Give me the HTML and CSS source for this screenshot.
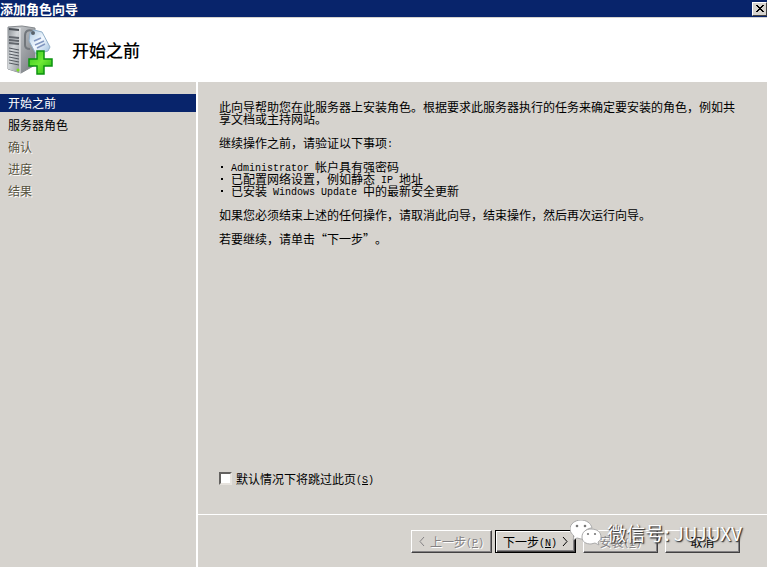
FILE: index.html
```html
<!DOCTYPE html>
<html lang="zh-CN">
<head>
    <meta charset="UTF-8">
    <meta name="viewport" content="width=device-width, initial-scale=1.0">
    <title>添加角色向导</title>
    <link rel="stylesheet" href="styles.css">
</head>
<body>
    <div class="titlebar">
        <span>添加角色向导</span>
        <button type="button" class="close" aria-label="关闭">
            <svg width="8" height="7" viewBox="0 0 8 7" shape-rendering="crispEdges"><path d="M0 0h2v1h1v1h2v-1h1v-1h2v1h-1v1h-1v1h-1v1h1v1h1v1h1v1h-2v-1h-1v-1h-2v1h-1v1h-2v-1h1v-1h1v-1h1v-1h-1v-1h-1v-1h-1z"/></svg>
        </button>
    </div>

    <header class="header">
        <svg class="logo" width="48" height="50" viewBox="0 0 48 50">
            <defs>
                <linearGradient id="front" x1="0" y1="0" x2="1" y2="1">
                    <stop offset="0" stop-color="#8d9297"/>
                    <stop offset=".45" stop-color="#d3d7da"/>
                    <stop offset="1" stop-color="#92979b"/>
                </linearGradient>
                <linearGradient id="side" x1="0" y1="0" x2="1" y2="1">
                    <stop offset="0" stop-color="#d4d7da"/>
                    <stop offset="1" stop-color="#74787d"/>
                </linearGradient>
                <linearGradient id="tag" x1="0" y1="0" x2="1" y2="1">
                    <stop offset="0" stop-color="#a9c7e2"/>
                    <stop offset=".5" stop-color="#f5faff"/>
                    <stop offset="1" stop-color="#98badb"/>
                </linearGradient>
                <linearGradient id="plus" x1="0" y1="0" x2="1" y2="1">
                    <stop offset="0" stop-color="#35c51d"/>
                    <stop offset=".5" stop-color="#6fea35"/>
                    <stop offset="1" stop-color="#1fae12"/>
                </linearGradient>
            </defs>
            <path d="M1 2 15 1l13 2v37l-14 8L1 44z" fill="url(#side)" stroke="#85898d"/>
            <path d="M1 2l12 1v45L1 44z" fill="url(#front)"/>
            <path d="M13 3v45" stroke="#f1f2f3"/>
            <path d="M2 3l10 1v2L2 5z" fill="#4c5157"/>
            <path d="M2 12l10 1M2 15l10 1M2 18l10 1" stroke="#62676d" stroke-width="2"/>
            <path d="M2 23l10 2M2 26l10 2M2 29l10 2M2 32l10 2M2 35l10 2M2 38l10 2" stroke="#555a61"/>
            <circle cx="11" cy="45" r="1.5" fill="#79df20"/>
            <path d="M26 6c-5-2-8 0-8 5v9q0 4 5 4" fill="none" stroke="#72777c" stroke-width="2"/>
            <path d="M23 8l4-3 8 2 8 15-2 4-12 3-7-13z" fill="url(#tag)" stroke="#91aec8"/>
            <circle cx="26" cy="8" r="2" fill="#59626b"/>
            <path d="M27 16l7-3M28 20l9-4M30 23l8-4" stroke="#8297c0" stroke-width="1.5"/>
            <path d="M30 26h7v8h8v7h-8v8h-7v-8h-8v-7h8z" fill="url(#plus)" stroke="#0c9310" stroke-width="1.5"/>
        </svg>
        <h1>开始之前</h1>
    </header>

    <div class="wizard">
        <nav class="steps">
            <a href="#before" class="active">开始之前</a>
            <a href="#roles">服务器角色</a>
            <a class="disabled">确认</a>
            <a class="disabled">进度</a>
            <a class="disabled">结果</a>
        </nav>

        <main class="page">
            <section class="content" id="before">
                <p>此向导帮助您在此服务器上安装角色。根据要求此服务器执行的任务来确定要安装的角色，例如共享文档或主持网站。</p>
                <p>继续操作之前，请验证以下事项<span class="latin">:</span></p>
                <ul>
                    <li><span class="latin">Administrator </span>帐户具有强密码</li>
                    <li>已配置网络设置，例如静态<span class="latin"> IP </span>地址</li>
                    <li>已安装<span class="latin"> Windows Update </span>中的最新安全更新</li>
                </ul>
                <p>如果您必须结束上述的任何操作，请取消此向导，结束操作，然后再次运行向导。</p>
                <p>若要继续，请单击“下一步<span class="quote">”</span>。</p>
                <div class="skip">
                    <input type="checkbox" id="skip">
                    <label for="skip">默认情况下将跳过此页<span class="latin">(<u>S</u>)</span></label>
                </div>
            </section>

            <footer class="buttons">
                <div class="pair">
                    <button type="button" class="wide" disabled>
                        <svg width="6" height="9" viewBox="0 0 6 9"><path d="M5 0 1 4.5 5 9"/></svg>
                        <span>上一步<span class="latin">(<u>P</u>)</span></span>
                    </button>
                    <button type="button" class="wide default">
                        <span>下一步<span class="latin">(<u>N</u>)</span></span>
                        <svg width="6" height="9" viewBox="0 0 6 9"><path d="M1 0 5 4.5 1 9"/></svg>
                    </button>
                </div>
                <button type="button" disabled><span>安装<span class="latin">(<u>I</u>)</span></span></button>
                <button type="button">取消</button>
                <div class="watermark">
                    <svg width="32" height="26" viewBox="0 0 32 26">
                        <path d="M11 0C5 0 0 4 0 9c0 3 2 5 4 7l-1 4 4-2 4 1h2c-1-7 4-11 9-11C21 3 16 0 11 0z"/>
                        <path d="M21 9c-5 0-9 3-9 8s4 7 9 7l4-1 4 2-1-3c2-1 3-3 3-5 0-5-4-8-10-8z"/>
                        <g fill="#777"><circle cx="7" cy="6" r="1.3"/><circle cx="15" cy="6" r="1.3"/><circle cx="18" cy="14" r="1.1"/><circle cx="25" cy="14" r="1.1"/></g>
                    </svg>
                    <span>微信号: JUJUXV</span>
                </div>
            </footer>
        </main>
    </div>
</body>
</html>
```
FILE: styles.css
```css
* {
    box-sizing: border-box;
}

body {
    display: flex;
    flex-direction: column;
    min-height: 100vh;
    margin: 0;
    background-color: #d6d3ce;
    color: #000;
    font-family: "Noto Sans CJK SC", sans-serif;
    font-size: 12px;
    line-height: 12px;
}

.latin {
    font-family: "Liberation Mono", monospace;
    font-size: 10px;
    line-height: 0;
    vertical-align: 1px;
    white-space: pre;
}

.titlebar {
    display: flex;
    justify-content: space-between;
    align-items: center;
    height: 17px;
    background-color: #08246b;
    color: #fff;
    font-size: 13px;
    font-weight: bold;
}

.close {
    display: flex;
    align-items: center;
    justify-content: center;
    width: 15px;
    height: 14px;
    padding: 0;
    background-color: #d6d3ce;
    border: 1px solid;
    border-color: #fff #424142 #424142 #fff;
}

.header {
    display: flex;
    align-items: center;
    gap: 17px;
    height: 65px;
    padding-left: 7px;
    background-color: #fff;
    border-top: 1px solid #d6d3ce;
}

h1 {
    margin: 0;
    font-size: 17px;
    line-height: 24px;
    font-weight: 500;
}

.wizard {
    display: flex;
    flex: 1;
}

.steps {
    display: flex;
    flex-direction: column;
    gap: 4px;
    width: 198px;
    padding-top: 12px;
    border-right: 2px solid #fff;
}

.steps a {
    padding: 0 8px;
    color: #000;
    line-height: 18px;
    text-decoration: none;
}

.steps a.active {
    background-color: #08246b;
    color: #fff;
}

.steps a.disabled {
    color: #57533f;
    text-shadow: 1px 1px #fff;
}

.page {
    display: flex;
    flex: 1;
    flex-direction: column;
}

.content {
    display: flex;
    flex: 1;
    flex-direction: column;
    padding: 19px 27px 29px 21px;
}

p, ul {
    margin: 0 0 12px;
}

ul {
    padding: 0;
    list-style: none;
}

li::before {
    content: "";
    display: inline-block;
    width: 2px;
    height: 2px;
    margin: 0 8px 4px 2px;
    background-color: #000;
}

.quote {
    display: inline-block;
    width: 12px;
}

.skip {
    display: flex;
    align-items: center;
    gap: 4px;
    margin-top: auto;
}

.skip input {
    appearance: none;
    width: 13px;
    height: 13px;
    margin: 0;
    background-color: #fff;
    border: 2px solid;
    border-color: #63615f #e7e3de #e7e3de #63615f;
}

.buttons {
    position: relative;
    display: flex;
    justify-content: flex-end;
    gap: 7px;
    height: 53px;
    padding: 15px 27px 0 0;
    border-top: 1px solid #fff;
}

.pair {
    display: flex;
    gap: 3px;
}

.buttons button {
    display: flex;
    align-items: center;
    justify-content: center;
    width: 75px;
    height: 23px;
    padding: 0;
    background-color: #d6d3ce;
    border: 1px solid;
    border-color: #fff #424142 #424142 #fff;
    box-shadow: inset -1px -1px #848284;
    color: #000;
    font: inherit;
}

.buttons .wide {
    gap: 5px;
    width: 81px;
}

.buttons .default {
    border-color: #000;
    box-shadow: inset 1px 1px #fff, inset -1px -1px #424142, inset -2px -2px #848284;
}

.buttons button:disabled {
    color: #848284;
    text-shadow: 1px 1px #fff;
}

.buttons path {
    fill: none;
    stroke: currentColor;
}

.watermark {
    position: absolute;
    top: 4px;
    right: 25px;
    display: flex;
    align-items: center;
    gap: 5px;
    color: #fff;
    font-size: 19px;
    line-height: 28px;
    text-shadow: 1px 1px 1px #333, 1px 1px 2px #666;
    pointer-events: none;
}

.buttons .watermark path {
    fill: #fff;
    stroke: #aaa;
}
```
